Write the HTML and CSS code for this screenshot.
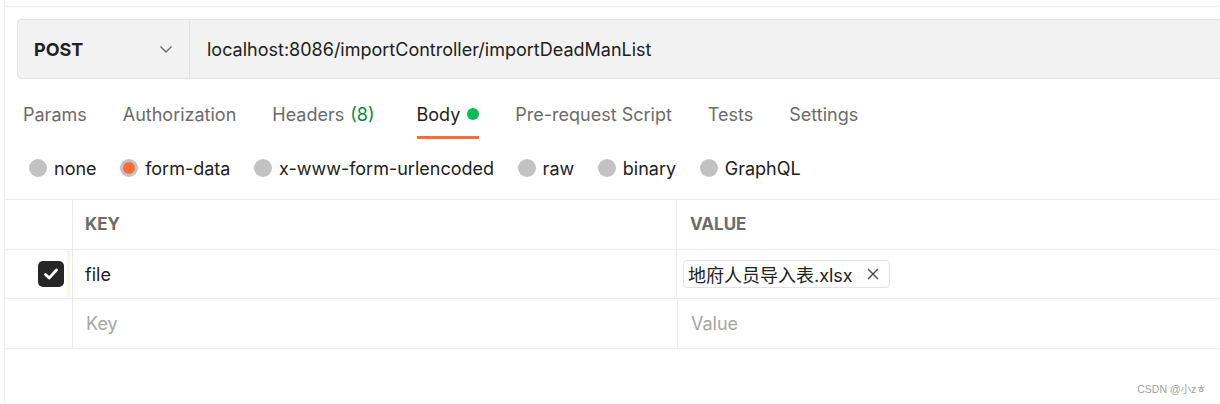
FILE: index.html
```html
<!DOCTYPE html>
<html lang="en">
<head>
<meta charset="utf-8">
<title>Postman request</title>
<link rel="stylesheet" href="styles.css">
</head>
<body>
<div class="frame">
  <div class="topline"></div>
  <div class="urlbar">
    <div class="method">
      <span class="method-name">POST</span>
      <svg class="chevron" width="14" height="14" viewBox="0 0 14 14"><path d="M1.5 4.5 L7 10 L12.5 4.5" fill="none" stroke="#6b6b6b" stroke-width="1.4"/></svg>
    </div>
    <div class="url">localhost:8086/importController/importDeadManList</div>
  </div>

  <div class="tabs">
    <div class="tab">Params</div>
    <div class="tab">Authorization</div>
    <div class="tab">Headers <span class="count">(8)</span></div>
    <div class="tab active">Body <span class="dot"></span></div>
    <div class="tab">Pre-request Script</div>
    <div class="tab">Tests</div>
    <div class="tab">Settings</div>
  </div>

  <div class="radios">
    <label class="radio"><span class="circle"></span>none</label>
    <label class="radio"><span class="circle on"></span>form-data</label>
    <label class="radio"><span class="circle"></span>x-www-form-urlencoded</label>
    <label class="radio"><span class="circle"></span>raw</label>
    <label class="radio"><span class="circle"></span>binary</label>
    <label class="radio"><span class="circle"></span>GraphQL</label>
  </div>

  <div class="table">
    <div class="row head">
      <div class="c1"></div>
      <div class="c2">KEY</div>
      <div class="c3">VALUE</div>
    </div>
    <div class="row body-row">
      <div class="c1 check-cell">
        <span class="checkbox"><svg width="18" height="18" viewBox="0 0 18 18"><path d="M3.5 9.5 L7.2 13 L14.5 5" fill="none" stroke="#fff" stroke-width="2.8" stroke-linecap="round" stroke-linejoin="round"/></svg></span>
        <span class="strip"></span>
      </div>
      <div class="c2">file</div>
      <div class="c3">
        <span class="chip">地府人员导入表.xlsx<svg class="x" width="12" height="12" viewBox="0 0 12 12"><path d="M1 1 L11 11 M11 1 L1 11" stroke="#4a4a4a" stroke-width="1.4"/></svg></span>
      </div>
    </div>
    <div class="row">
      <div class="c1"></div>
      <div class="c2 ph">Key</div>
      <div class="c3 ph">Value</div>
    </div>
  </div>
  <div class="watermark">CSDN @小zㅎ</div>
</div>
</body>
</html>
```

FILE: styles.css
```css
html, body {
  margin: 0;
  padding: 0;
  background: #fff;
  overflow: hidden;
}
body {
  font-family: Inter, "Noto Sans CJK SC", sans-serif;
  color: #212121;
  font-size: 18px;
}
.frame {
  position: relative;
  margin-left: 4px;
  margin-right: -40px;
  border-left: 1px solid #ececec;
  height: 404px;
}
.topline {
  height: 6px;
  border-bottom: 1px solid #ebebeb;
}
.urlbar {
  display: flex;
  margin: 12px 0 0 12px;
  height: 58px;
  background: #f2f2f2;
  border: 1px solid #e3e3e3;
  border-radius: 4px;
}
.method {
  width: 139px;
  padding: 0 16px 0 16px;
  border-right: 1px solid #e0e0e0;
  display: flex;
  align-items: center;
  justify-content: space-between;
  flex: none;
}
.method-name {
  font-weight: 700;
  font-size: 18px;
  color: #212121;
}
.url {
  display: flex;
  align-items: center;
  padding-left: 17px;
  font-size: 18px;
  color: #212121;
}
.tabs {
  display: flex;
  gap: 36px;
  margin: 16px 0 0 18px;
  height: 44px;
}
.tab {
  display: flex;
  align-items: center;
  height: 38px;
  padding-bottom: 3px;
  color: #6b6b6b;
  font-size: 18px;
  border-bottom: 3px solid transparent;
}
.tab .count { color: #0a8a3c; margin-left: 6px; }
.tab.active {
  color: #212121;
  border-bottom-color: #ff6c37;
  margin-left: 6px;
}
.dot {
  width: 12px;
  height: 12px;
  border-radius: 50%;
  background: #0cbb52;
  margin-left: 7px;
  display: inline-block;
}
.radios {
  display: flex;
  gap: 23.6px;
  margin: 14px 0 0 24px;
  height: 46px;
}
.radio {
  display: flex;
  align-items: center;
  gap: 7px;
  height: 30px;
  color: #212121;
  font-size: 18px;
}
.circle {
  width: 18px;
  height: 18px;
  border-radius: 50%;
  background: #c2c2c2;
  box-sizing: border-box;
  display: inline-block;
}
.circle.on {
  background: #ff6c37;
  border: 3px solid #c2c2c2;
}
.table {
  border-top: 1px solid #ebebeb;
}
.row {
  display: flex;
  height: 49px;
  border-bottom: 1px solid #ebebeb;
}
.row.body-row { height: 48px; }
.c1 {
  width: 67px;
  border-right: 1px solid #ebebeb;
  flex: none;
}
.c2 {
  width: 591px;
  padding-left: 12px;
  border-right: 1px solid #ebebeb;
  flex: none;
  display: flex;
  align-items: center;
}
.c3 {
  flex: 1;
  padding-left: 13px;
  display: flex;
  align-items: center;
}
.head .c2, .head .c3 {
  font-weight: 700;
  color: #6b6b6b;
  font-size: 17px;
  padding-bottom: 2px;
}
.ph { color: #a6a6a6; }
.c2.ph { padding-left: 13px; }
.c3.ph { padding-left: 13px; }
.check-cell {
  display: flex;
  align-items: center;
  justify-content: flex-end;
}
.checkbox {
  width: 26px;
  height: 26px;
  border-radius: 5px;
  background: #262626;
  display: flex;
  align-items: center;
  justify-content: center;
}
.strip {
  width: 3px;
  height: 46px;
  background: #fdf6de;
  margin-left: 3px;
  margin-right: 2px;
}
.chip {
  display: inline-flex;
  align-items: center;
  height: 26px;
  border: 1px solid #e3e3e3;
  border-radius: 4px;
  padding: 0 10px 0 4px;
  margin-left: -7px;
  font-size: 18px;
  color: #212121;
  gap: 14px;
}
.chip .x { flex: none; }
.watermark {
  position: absolute;
  right: 54px;
  top: 381px;
  font-family: "Liberation Sans", "Noto Sans CJK SC", sans-serif;
  font-size: 10.5px;
  color: #a0a0a0;
}
```
